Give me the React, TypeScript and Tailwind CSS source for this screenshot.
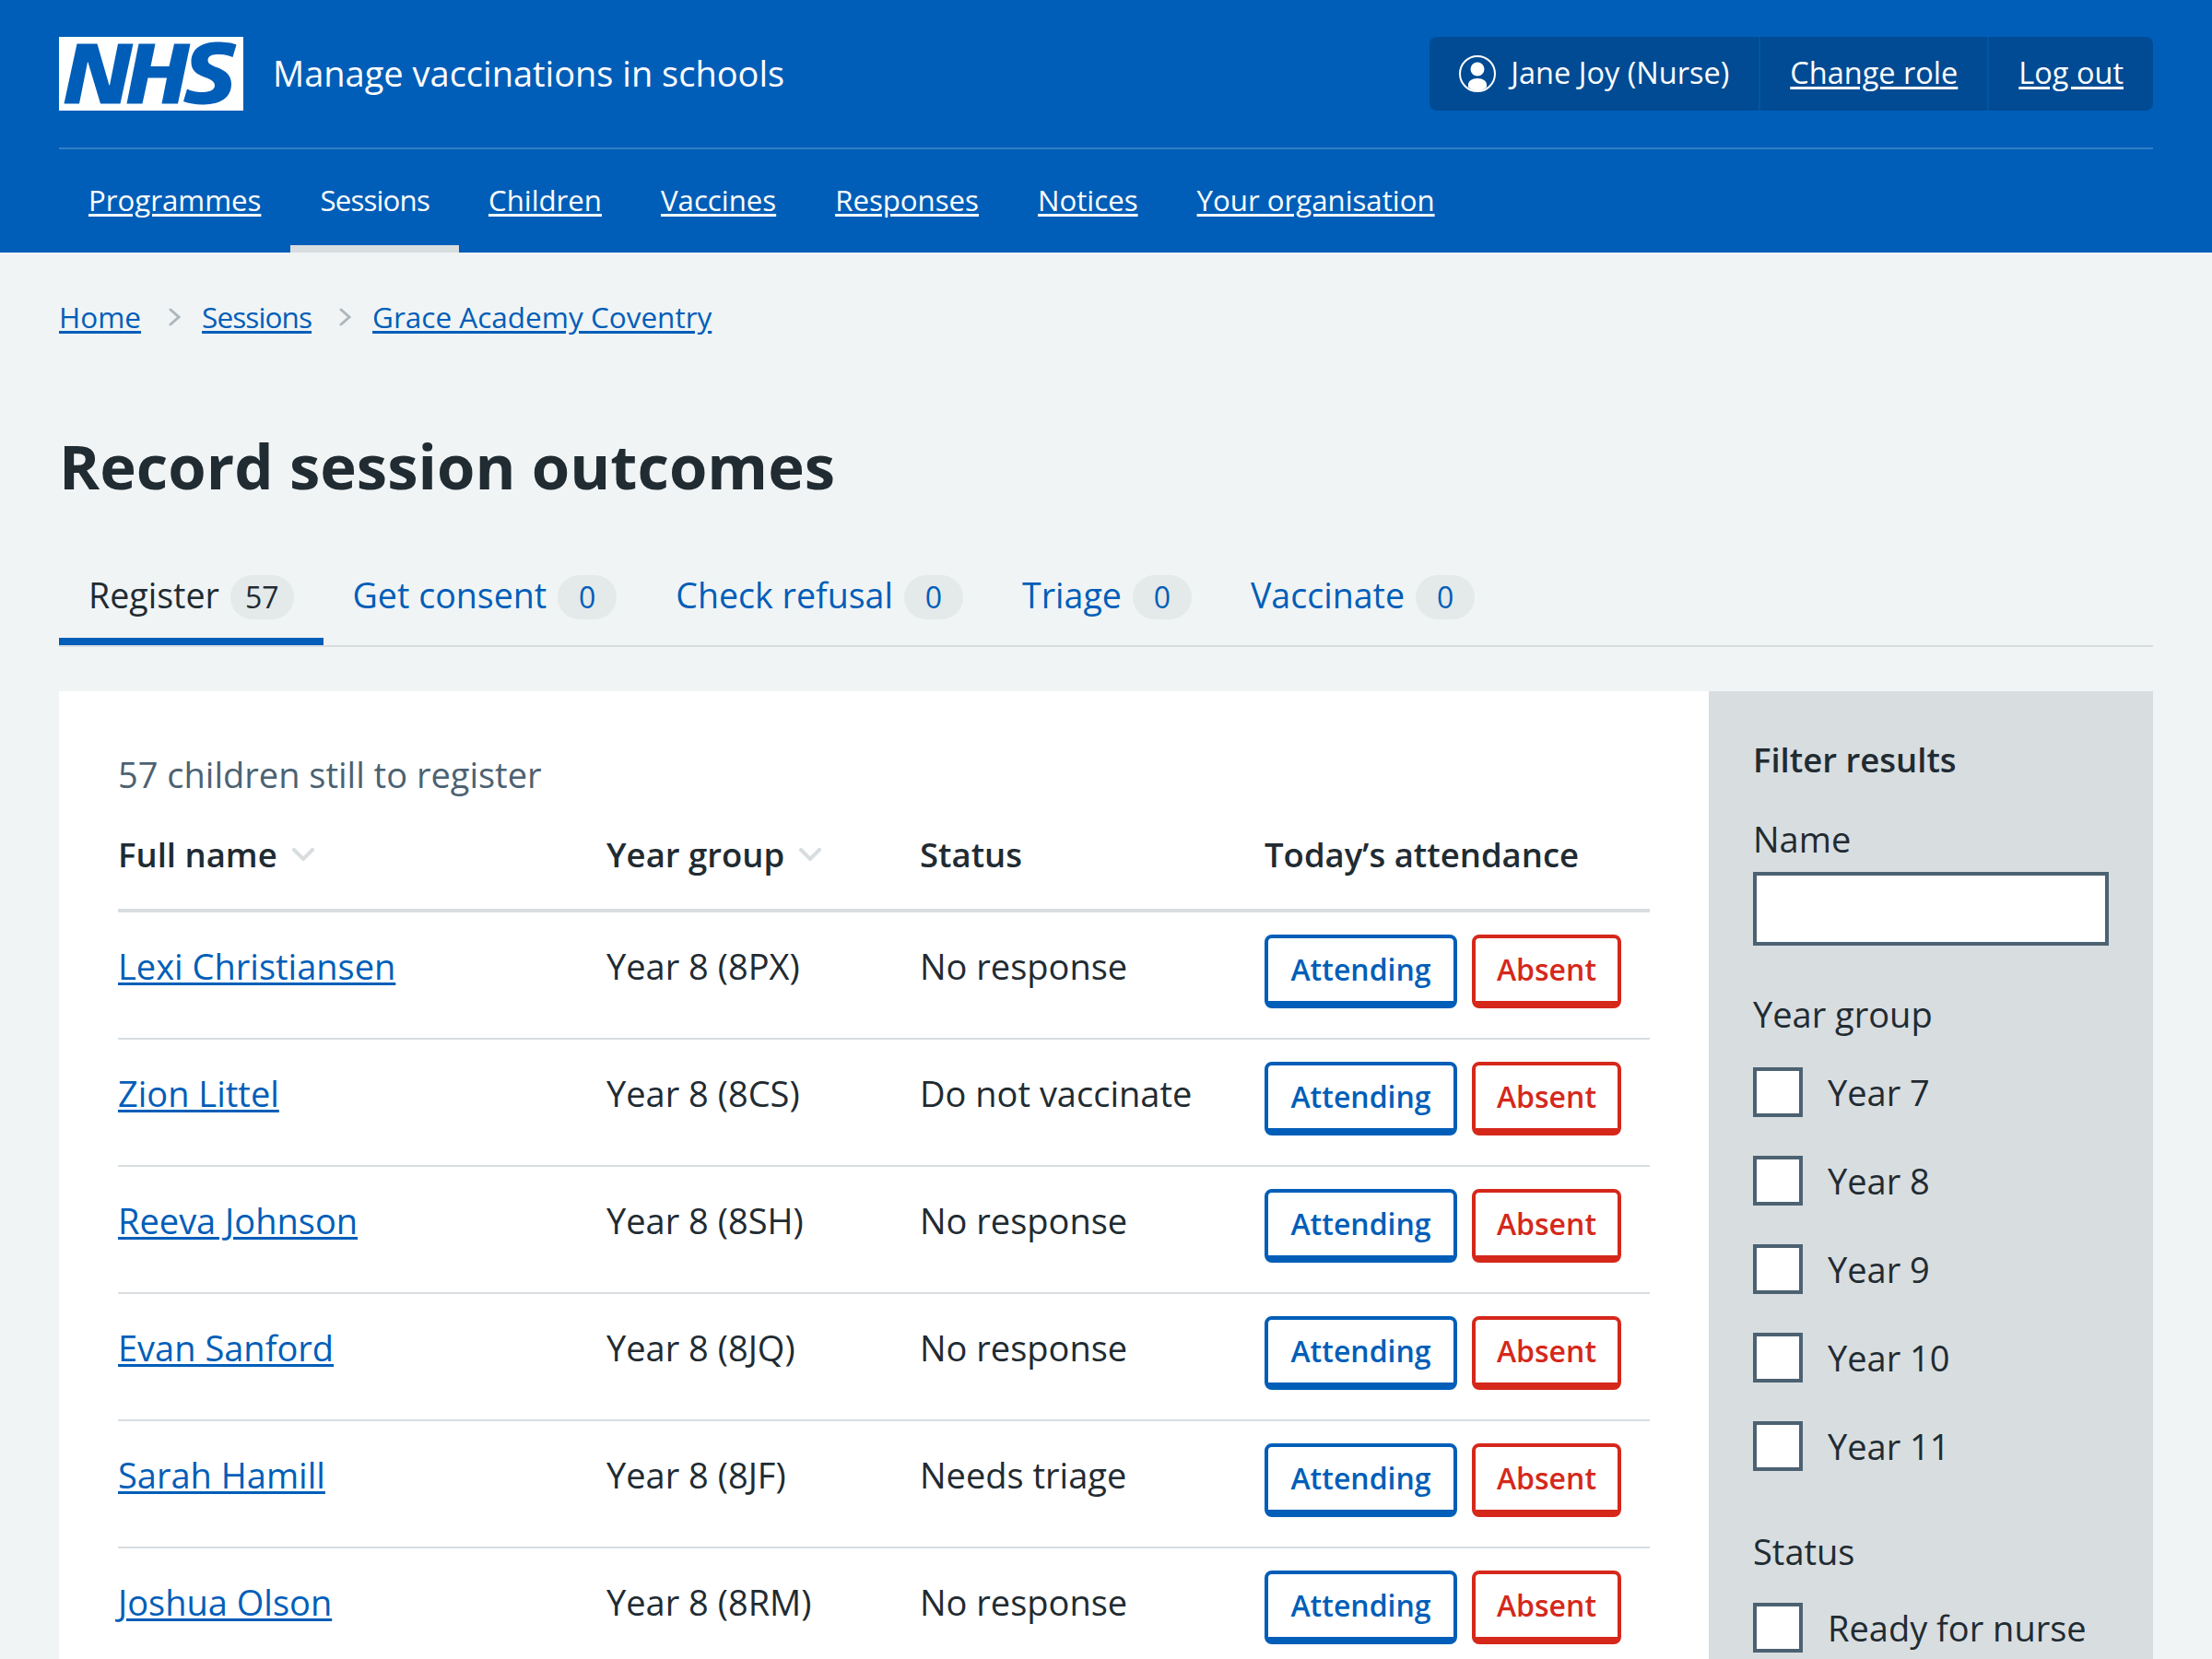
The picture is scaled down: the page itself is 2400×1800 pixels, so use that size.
import React from 'react';

const navItems = ['Programmes', 'Sessions', 'Children', 'Vaccines', 'Responses', 'Notices', 'Your organisation'];

const tabs = [
  { label: 'Register', count: 57 },
  { label: 'Get consent', count: 0 },
  { label: 'Check refusal', count: 0 },
  { label: 'Triage', count: 0 },
  { label: 'Vaccinate', count: 0 },
];

const rows = [
  { name: 'Lexi Christiansen', year: 'Year 8 (8PX)', status: 'No response' },
  { name: 'Zion Littel', year: 'Year 8 (8CS)', status: 'Do not vaccinate' },
  { name: 'Reeva Johnson', year: 'Year 8 (8SH)', status: 'No response' },
  { name: 'Evan Sanford', year: 'Year 8 (8JQ)', status: 'No response' },
  { name: 'Sarah Hamill', year: 'Year 8 (8JF)', status: 'Needs triage' },
  { name: 'Joshua Olson', year: 'Year 8 (8RM)', status: 'No response' },
];

const NhsLogo = () => (
  <svg viewBox="0 0 40 16" className="h-[80px] w-[200px] shrink-0">
    <path fill="#fff" d="M0 0h40v16H0z" />
    <path
      fill="#005eb8"
      d="M3.9 1.5h4.4l2.6 9h.1l1.8-9h3.3l-2.8 13H9l-2.7-9h-.1l-1.8 9H1.1M17.3 1.5h3.6l-1 4.9h4L25 1.5h3.5l-2.7 13h-3.5l1.1-5.6h-4.1l-1.2 5.6h-3.4M37.7 4.4c-.7-.3-1.6-.6-2.9-.6-1.4 0-2.5.2-2.5 1.3 0 1.8 5.1 1.2 5.1 5.1 0 3.6-3.3 4.5-6.4 4.5-1.3 0-2.9-.3-4-.7l.8-2.7c.7.4 2.1.7 3.2.7s2.8-.2 2.8-1.5c0-2.1-5.1-1.3-5.1-5 0-3.4 2.9-4.4 5.8-4.4 1.6 0 3.1.2 4 .6"
    />
  </svg>
);

const UserIcon = () => (
  <svg viewBox="0 0 40 40" className="h-[40px] w-[40px] shrink-0">
    <circle cx="20" cy="20" r="19" fill="none" stroke="#fff" strokeWidth="2" />
    <circle cx="20" cy="15" r="7.5" fill="#fff" />
    <path fill="#fff" d="M10 32c0-4 4-7 10-7s10 3 10 7v2.5c-3 2.500-6 4-10 4s-7-1.500-10-4z" />
  </svg>
);

const SortChevron = () => (
  <svg viewBox="0 0 24 14" className="h-[14px] w-[24px] shrink-0" fill="none" stroke="#d8dde0" strokeWidth="4" strokeLinecap="round">
    <path d="M2 2l10 10L22 2" />
  </svg>
);

const Crumb = ({ label, last }: { label: string; last?: boolean }) => (
  <>
    <a className={label === 'Sessions' ? 'underline decoration-[3px] underline-offset-[3px] tracking-[-0.9px]' : 'underline decoration-[3px] underline-offset-[3px]'}>
      {label}
    </a>
    {!last && (
      <svg viewBox="0 0 14 20" className="ml-[30px] mr-[22px] h-[20px] w-[14px]" fill="none" stroke="#aeb7bd" strokeWidth="3" strokeLinecap="round">
        <path d="M2 2l9 8-9 8" />
      </svg>
    )}
  </>
);

const FilterCheckbox = ({ label }: { label: string }) => (
  <label className="flex h-[54px] items-center gap-[27px]">
    <span className="h-[54px] w-[54px] shrink-0 border-[4px] border-[#4c6272] bg-white" />
    <span>{label}</span>
  </label>
);

export default function App() {
  return (
    <div className="h-screen overflow-hidden bg-[#f0f4f5] font-['Open_Sans',sans-serif] text-[38px] leading-[52px] text-[#212b32]">
      <header className="h-[274px] bg-[#005eb8] px-[64px] text-white">
        <div className="flex h-[162px] items-center justify-between border-b-[2px] border-[#337ec6]">
          <div className="flex items-center gap-[32px]">
            <NhsLogo />
            <span className="pb-[2px]">Manage vaccinations in schools</span>
          </div>
          <div className="flex h-[80px] items-center rounded-[8px] bg-[#004b93] text-[32.5px]">
            <div className="flex h-full items-center gap-[16px] border-r-[2px] border-[#0055a6] px-[32px]">
              <UserIcon />
              <span className="pb-[2px]">Jane Joy (Nurse)</span>
            </div>
            <a className="flex h-full items-center border-r-[2px] border-[#0055a6] px-[32px] pb-[2px]">
              <span className="underline decoration-[3px] underline-offset-[3px]">Change role</span>
            </a>
            <a className="flex h-full items-center px-[32px] pb-[2px]">
              <span className="underline decoration-[3px] underline-offset-[3px]">Log out</span>
            </a>
          </div>
        </div>
        <nav className="flex h-[112px] text-[31.2px]">
          {navItems.map((item) => (
            <a
              key={item}
              className={
                item === 'Sessions'
                  ? 'flex items-center border-b-[8px] border-[#d8dde0] px-[32px] pt-[6px] tracking-[-0.8px]'
                  : 'flex items-center border-b-[8px] border-transparent px-[32px] pt-[6px] underline decoration-[3px] underline-offset-[3px]'
              }
            >
              {item}
            </a>
          ))}
        </nav>
      </header>

      <main className="px-[64px]">
        <div className="flex h-[48px] items-center pt-[46px] text-[31.5px] text-[#005eb8] box-content">
          <Crumb label="Home" />
          <Crumb label="Sessions" />
          <Crumb label="Grace Academy Coventry" last />
        </div>

        <h1 className="mt-[89px] text-[67px] font-bold leading-[96px]">Record session outcomes</h1>

        <div className="mt-[47px] flex h-[102px] border-b-[2px] border-[#d8dde0]">
          {tabs.map((tab, i) => (
            <div
              key={tab.label}
              className={
                i === 0
                  ? 'flex h-[100px] items-center gap-[12px] border-b-[8px] border-[#005eb8] px-[32px] pt-[4px]'
                  : 'flex h-[100px] items-center gap-[12px] border-b-[8px] border-transparent px-[32px] pt-[4px] text-[#005eb8]'
              }
            >
              <span className="pb-[5px] text-[37.6px]">{tab.label}</span>
              <span className="flex h-[48px] min-w-[64px] items-center justify-center rounded-full bg-[#e4e9ea] px-[16px] text-[32px]">
                {tab.count}
              </span>
            </div>
          ))}
        </div>

        <div className="mt-[48px] flex">
          <section className="w-[1790px] bg-white px-[64px]">
            <p className="pt-[64px] text-[#4c6272]">57 children still to register</p>
            <div className="grid h-[124px] grid-cols-[530px_340px_374px_418px] items-center border-b-[4px] border-[#d8dde0] pt-[2px] text-[36.5px] font-semibold">
              <div className="flex items-center gap-[16px]">
                Full name <SortChevron />
              </div>
              <div className="flex items-center gap-[16px]">
                Year group <SortChevron />
              </div>
              <div>Status</div>
              <div>Today’s attendance</div>
            </div>
            {rows.map((row) => (
              <div key={row.name} className="grid h-[138px] grid-cols-[530px_340px_374px_418px] border-b-[2px] border-[#d8dde0]">
                <a className="pt-[32px] text-[#005eb8]">
                  <span className="underline decoration-[3px] underline-offset-[3px]">{row.name}</span>
                </a>
                <div className="pt-[32px]">{row.year}</div>
                <div className="pt-[32px]">{row.status}</div>
                <div className="flex gap-[16px] pt-[24px] text-[32px] font-semibold">
                  <button className="h-[80px] w-[209px] rounded-[8px] border-x-[4px] border-b-[8px] border-t-[4px] border-[#005eb8] bg-white text-[#005eb8]">
                    Attending
                  </button>
                  <button className="h-[80px] w-[162px] rounded-[8px] border-x-[4px] border-b-[8px] border-t-[4px] border-[#d5281b] bg-white text-[#d5281b]">
                    Absent
                  </button>
                </div>
              </div>
            ))}
          </section>

          <aside className="w-[482px] bg-[#d8dde0] px-[48px] pt-[48px]">
            <h2 className="text-[36.5px] font-semibold">Filter results</h2>
            <div className="mt-[34px]">Name</div>
            <div className="mt-[10px] h-[80px] border-[4px] border-[#4c6272] bg-white" />
            <div className="mt-[48px]">Year group</div>
            <div className="mt-[32px] flex flex-col gap-[42px]">
              <FilterCheckbox label="Year 7" />
              <FilterCheckbox label="Year 8" />
              <FilterCheckbox label="Year 9" />
              <FilterCheckbox label="Year 10" />
              <FilterCheckbox label="Year 11" />
            </div>
            <div className="mt-[61px]">Status</div>
            <div className="mt-[30px]">
              <FilterCheckbox label="Ready for nurse" />
            </div>
          </aside>
        </div>
      </main>
    </div>
  );
}
